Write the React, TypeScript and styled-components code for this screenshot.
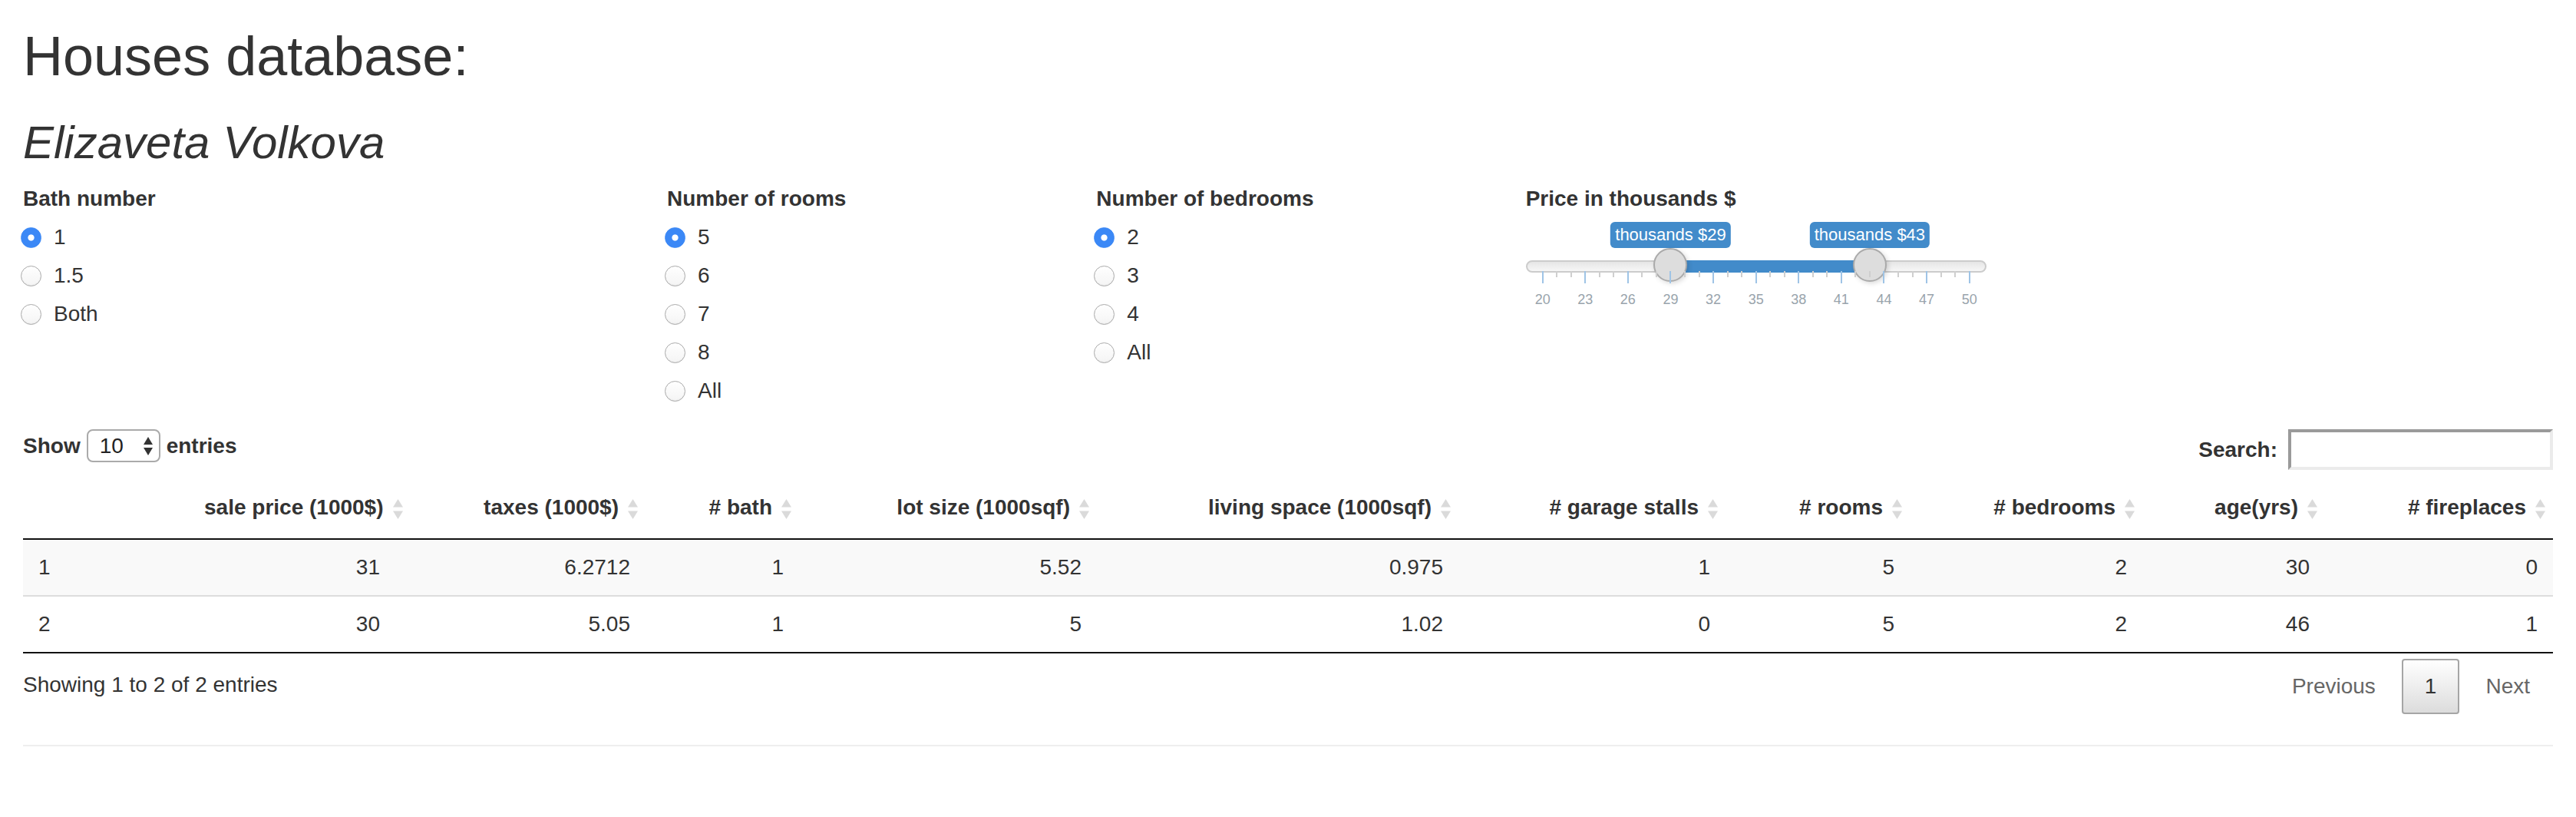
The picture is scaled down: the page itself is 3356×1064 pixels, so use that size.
import React from "react";
import styled, { createGlobalStyle } from "styled-components";

const GlobalStyle = createGlobalStyle`
  html, body { margin: 0; padding: 0; background: #fff; }
  body {
    font-family: "Liberation Sans", Arial, Helvetica, sans-serif;
    font-size: 28px;
    line-height: 40px;
    color: #333;
  }
  *, *::before, *::after { box-sizing: border-box; }
`;

const Page = styled.div`
  padding: 0 30px;
  display: flow-root;
`;

const Title = styled.h1`
  font-size: 72px;
  font-weight: 400;
  line-height: 1.1;
  margin: 34px 0 20px;
  color: #333;
`;

const Subtitle = styled.h2`
  font-size: 60px;
  font-weight: 400;
  font-style: italic;
  line-height: 1.1;
  margin: 40px 0 20px;
  color: #333;
`;

/* ---------- filter row ---------- */

const FilterRow = styled.div`
  display: flex;
  margin: 0 -30px;
`;

const FilterCol = styled.div<{ $span?: number }>`
  flex: ${(p) => (p.$span ? `0 0 ${(p.$span / 12) * 100}%` : "1 1 auto")};
  min-width: 0;
  padding: 0 30px;
`;

const InputGroup = styled.div`
  width: 600px;
  max-width: 100%;
  margin-bottom: 30px;
  display: flex;
  flex-direction: column;
`;

const GroupLabel = styled.label`
  display: block;
  font-weight: 700;
  line-height: 40px;
  margin-bottom: 10px;
  white-space: nowrap;
`;

const Options = styled.div`
  display: flex;
  flex-direction: column;
  gap: 10px;
`;

const OptionLabel = styled.label`
  display: flex;
  align-items: flex-start;
  height: 40px;
  line-height: 40px;
  font-weight: 400;
  cursor: pointer;
`;

const RadioInput = styled.input`
  appearance: none;
  -webkit-appearance: none;
  flex: none;
  width: 27px;
  height: 27px;
  margin: 7px 16px 0 -3px;
  border-radius: 50%;
  border: 1.5px solid #a9a9a9;
  background: linear-gradient(to bottom, #ffffff, #f4f4f4);
  box-shadow: inset 0 -1px 1px rgba(0, 0, 0, 0.05);
  &:checked {
    border-color: #3b88f6;
    background: radial-gradient(circle, #ffffff 0 3.6px, #3b88f6 4.6px);
    box-shadow: none;
  }
`;

/* ---------- range slider ---------- */

const SliderBox = styled.div`
  position: relative;
  width: 600px;
  height: 120px;
`;

const SliderLine = styled.div`
  position: absolute;
  left: 0;
  right: 0;
  top: 50px;
  height: 16px;
  border: 2px solid #cccccc;
  border-radius: 32px;
  background: linear-gradient(to bottom, #dddddd -50%, #ffffff 150%);
`;

const SliderBar = styled.div`
  position: absolute;
  top: 50px;
  height: 16px;
  background: #428bca;
`;

const SliderHandle = styled.div`
  position: absolute;
  top: 34px;
  width: 44px;
  height: 44px;
  margin-left: -22px;
  border: 2px solid #aaaaaa;
  border-radius: 50%;
  background: #dddddd;
  box-shadow: 2px 2px 6px rgba(0, 0, 0, 0.15);
`;

const SliderValue = styled.span`
  position: absolute;
  top: 0;
  transform: translateX(-50%);
  padding: 2px 6px;
  font-size: 22px;
  line-height: 1.333;
  color: #fff;
  background: #428bca;
  border-radius: 6px;
  white-space: nowrap;
`;

const SliderGrid = styled.div`
  position: absolute;
  left: 0;
  right: 0;
  top: 64px;
  height: 56px;
`;

const GridTick = styled.span<{ $small?: boolean }>`
  position: absolute;
  top: 0;
  width: 2px;
  margin-left: -1px;
  height: ${(p) => (p.$small ? "8px" : "16px")};
  background: ${(p) => (p.$small ? "#cfcfcf" : "#9fc4e6")};
`;

const GridText = styled.span`
  position: absolute;
  top: 28px;
  transform: translateX(-50%);
  font-size: 18px;
  line-height: 18px;
  color: #99a4ac;
  white-space: nowrap;
`;

/* ---------- data table ---------- */

const TableWrapper = styled.div``;

const TopBar = styled.div`
  display: flex;
  justify-content: space-between;
  align-items: flex-start;
  padding-bottom: 9px;
`;

const LengthLabel = styled.label`
  display: flex;
  align-items: center;
  gap: 8px;
  height: 43px;
  font-weight: 700;
`;

const SelectWrap = styled.span`
  position: relative;
  display: inline-block;
`;

const NativeSelect = styled.select`
  appearance: none;
  -webkit-appearance: none;
  width: 96px;
  height: 43px;
  padding: 0 0 0 15px;
  border: 2px solid #aaaaaa;
  border-radius: 8px;
  background: #fff;
  font-family: inherit;
  font-size: 28px;
  color: #222;
`;

const SelectArrows = styled.svg`
  position: absolute;
  right: 9px;
  top: 50%;
  transform: translateY(-50%);
  pointer-events: none;
`;

const FilterLabel = styled.label`
  display: flex;
  align-items: center;
  gap: 14px;
  font-weight: 700;
`;

const SearchInput = styled.input`
  width: 345px;
  height: 53px;
  border-style: solid;
  border-width: 4px;
  border-color: #9a9a9a #ebebeb #ebebeb #9a9a9a;
  background: #fff;
  font-family: inherit;
  font-size: 28px;
  padding: 0 6px;
  outline: none;
`;

const Table = styled.table`
  width: 100%;
  border-collapse: separate;
  border-spacing: 0;
  table-layout: fixed;
  border-bottom: 2px solid #111;
  tbody tr + tr td {
    border-top: 2px solid #dddddd;
  }
`;

const Col = styled.col<{ $w: number }>`
  width: ${(p) => p.$w}px;
`;

const HeadCell = styled.th<{ $align: "left" | "right" }>`
  padding: 20px 36px;
  font-weight: 700;
  line-height: 40px;
  text-align: ${(p) => p.$align};
  border-bottom: 2px solid #111;
  white-space: nowrap;
  cursor: pointer;
`;

const SortIcon = styled.svg`
  display: inline-block;
  vertical-align: middle;
  margin-left: 11px;
  margin-right: -27px;
`;

const BodyRow = styled.tr<{ $odd: boolean }>`
  background: ${(p) => (p.$odd ? "#f9f9f9" : "#ffffff")};
`;

const BodyCell = styled.td<{ $align: "left" | "right" }>`
  padding: 16px 20px;
  line-height: 40px;
  text-align: ${(p) => p.$align};
  white-space: nowrap;
`;

const Footer = styled.div`
  display: flex;
  justify-content: space-between;
  align-items: flex-start;
`;

const Info = styled.div`
  padding-top: 21px;
`;

const Paginate = styled.div`
  display: flex;
  padding-top: 7px;
`;

const PageButton = styled.span<{ $current?: boolean }>`
  display: inline-block;
  padding: 14px 28px;
  margin-left: 4px;
  line-height: 40px;
  border: 2px solid ${(p) => (p.$current ? "#a5a5a5" : "transparent")};
  border-radius: 4px;
  color: ${(p) => (p.$current ? "#333" : "#666")};
  background: ${(p) =>
    p.$current ? "linear-gradient(to bottom, #ffffff 0%, #dcdcdc 100%)" : "transparent"};
  cursor: default;
`;

const Rule = styled.hr`
  margin: 40px 0;
  border: 0;
  border-top: 2px solid #eeeeee;
`;

/* ---------- data ---------- */

const bathOptions = ["1", "1.5", "Both"];
const roomOptions = ["5", "6", "7", "8", "All"];
const bedroomOptions = ["2", "3", "4", "All"];

const columns = [
  { title: "", width: 200 },
  { title: "sale price (1000$)", width: 285 },
  { title: "taxes (1000$)", width: 326 },
  { title: "# bath", width: 200 },
  { title: "lot size (1000sqf)", width: 388 },
  { title: "living space (1000sqf)", width: 471 },
  { title: "# garage stalls", width: 348 },
  { title: "# rooms", width: 240 },
  { title: "# bedrooms", width: 303 },
  { title: "age(yrs)", width: 238 },
  { title: "# fireplaces", width: 297 },
];

const rows = [
  ["1", "31", "6.2712", "1", "5.52", "0.975", "1", "5", "2", "30", "0"],
  ["2", "30", "5.05", "1", "5", "1.02", "0", "5", "2", "46", "1"],
];

const MIN = 20;
const MAX = 50;
const FROM = 29;
const TO = 43;
const SLIDER_W = 600;
const HANDLE_W = 44;
const pos = (v: number) => HANDLE_W / 2 + ((v - MIN) / (MAX - MIN)) * (SLIDER_W - HANDLE_W);

const RadioGroup: React.FC<{ label: string; name: string; options: string[] }> = ({
  label,
  name,
  options,
}) => (
  <InputGroup>
    <GroupLabel>{label}</GroupLabel>
    <Options>
      {options.map((o, i) => (
        <OptionLabel key={o}>
          <RadioInput type="radio" name={name} value={o} defaultChecked={i === 0} />
          <span>{o}</span>
        </OptionLabel>
      ))}
    </Options>
  </InputGroup>
);

const RangeSlider: React.FC = () => {
  const majors: number[] = [];
  for (let v = MIN; v <= MAX; v += 3) majors.push(v);
  return (
    <SliderBox>
      <SliderLine />
      <SliderBar style={{ left: pos(FROM), width: pos(TO) - pos(FROM) }} />
      <SliderValue style={{ left: pos(FROM) }}>thousands ${FROM}</SliderValue>
      <SliderValue style={{ left: pos(TO) }}>thousands ${TO}</SliderValue>
      <SliderHandle style={{ left: pos(FROM) }} />
      <SliderHandle style={{ left: pos(TO) }} />
      <SliderGrid>
        {majors.map((v, i) => (
          <React.Fragment key={v}>
            <GridTick style={{ left: pos(v) }} />
            {i < majors.length - 1 && (
              <>
                <GridTick $small style={{ left: pos(v + 1) }} />
                <GridTick $small style={{ left: pos(v + 2) }} />
              </>
            )}
            <GridText style={{ left: pos(v) }}>{v}</GridText>
          </React.Fragment>
        ))}
      </SliderGrid>
    </SliderBox>
  );
};

const SortBoth: React.FC = () => (
  <SortIcon width="15" height="30" viewBox="0 0 15 30" aria-hidden="true">
    <polygon points="7.5,2 14,12.5 1,12.5" fill="#dadada" />
    <polygon points="1,17.5 14,17.5 7.5,28" fill="#dadada" />
  </SortIcon>
);

export default function App() {
  return (
    <>
      <GlobalStyle />
      <Page>
        <Title>Houses database:</Title>
        <Subtitle>Elizaveta Volkova</Subtitle>

        <FilterRow>
          <FilterCol $span={3}>
            <RadioGroup label="Bath number" name="bath" options={bathOptions} />
          </FilterCol>
          <FilterCol $span={2}>
            <RadioGroup label="Number of rooms" name="rooms" options={roomOptions} />
          </FilterCol>
          <FilterCol $span={2}>
            <RadioGroup label="Number of bedrooms" name="bedrooms" options={bedroomOptions} />
          </FilterCol>
          <FilterCol>
            <InputGroup>
              <GroupLabel>Price in thousands $</GroupLabel>
              <RangeSlider />
            </InputGroup>
          </FilterCol>
        </FilterRow>

        <TableWrapper>
          <TopBar>
            <LengthLabel>
              Show
              <SelectWrap>
                <NativeSelect defaultValue="10">
                  <option value="10">10</option>
                  <option value="25">25</option>
                  <option value="50">50</option>
                  <option value="100">100</option>
                </NativeSelect>
                <SelectArrows width="14" height="26" viewBox="0 0 14 26" aria-hidden="true">
                  <polygon points="7,1 13,11 1,11" fill="#333" />
                  <polygon points="1,15 13,15 7,25" fill="#333" />
                </SelectArrows>
              </SelectWrap>
              entries
            </LengthLabel>
            <FilterLabel>
              Search:
              <SearchInput type="text" />
            </FilterLabel>
          </TopBar>

          <Table>
            <colgroup>
              {columns.map((c, i) => (
                <Col key={i} $w={c.width} />
              ))}
            </colgroup>
            <thead>
              <tr>
                {columns.map((c, i) => (
                  <HeadCell key={i} $align={i === 0 ? "left" : "right"}>
                    {c.title}
                    {i > 0 && <SortBoth />}
                  </HeadCell>
                ))}
              </tr>
            </thead>
            <tbody>
              {rows.map((r, ri) => (
                <BodyRow key={ri} $odd={ri % 2 === 0}>
                  {r.map((v, ci) => (
                    <BodyCell key={ci} $align={ci === 0 ? "left" : "right"}>
                      {v}
                    </BodyCell>
                  ))}
                </BodyRow>
              ))}
            </tbody>
          </Table>

          <Footer>
            <Info>Showing 1 to 2 of 2 entries</Info>
            <Paginate>
              <PageButton>Previous</PageButton>
              <PageButton $current>1</PageButton>
              <PageButton>Next</PageButton>
            </Paginate>
          </Footer>
        </TableWrapper>

        <Rule />
      </Page>
    </>
  );
}
